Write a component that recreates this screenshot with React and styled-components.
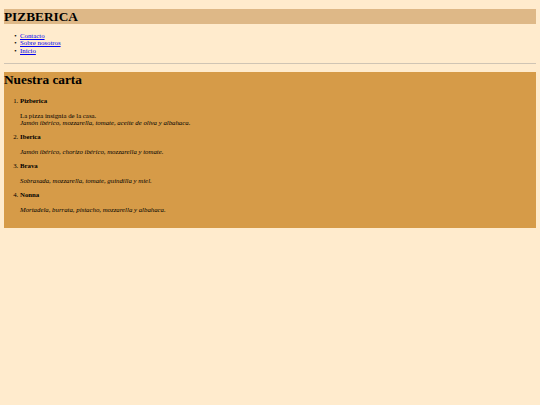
import React from "react";
import styled, { createGlobalStyle } from "styled-components";

const GlobalStyle = createGlobalStyle`
  html, body {
    margin: 0;
    padding: 0;
    background: #ffebcd;
    font-family: "Liberation Serif", "Times New Roman", serif;
    color: #000;
  }
`;

const Page = styled.div`
  padding: 9px 4px 0;
`;

const Header = styled.header`
  background: #deb887;
`;

const Title = styled.h1`
  margin: 0;
  font-size: 13.3px;
  line-height: 15px;
  font-weight: bold;
`;

const NavList = styled.ul`
  margin: 8px 0 0;
  padding-left: 16px;
  list-style: disc;
  font-size: 6.8px;
  line-height: 7.4px;
`;

const NavItem = styled.li`
  &::marker {
    content: "•\\00a0\\00a0";
  }
`;

const NavLink = styled.a`
  color: #0000ee;
  text-decoration: underline;
`;

const Rule = styled.hr`
  margin: 8.6px 0 8px;
  border: 0;
  border-top: 1px solid #cfc4b4;
  height: 0;
`;

const Menu = styled.section`
  background: #d69b48;
  padding: 0 0 7.6px;
`;

const MenuTitle = styled.h1`
  margin: 0;
  font-size: 13.3px;
  line-height: 15px;
  font-weight: bold;
`;

const Pizzas = styled.ol`
  margin: 10px 0 0;
  padding-left: 16px;
  list-style: decimal;
  font-size: 6.8px;
  line-height: 7.4px;
`;

const Pizza = styled.li``;

const PizzaName = styled.strong`
  display: block;
  margin-bottom: 7.6px;
`;

const PizzaText = styled.p`
  margin: 0 0 6.6px;
`;

const pizzas = [
  {
    name: "Pizberica",
    intro: "La pizza insignia de la casa.",
    ingredients: "Jamón ibérico, mozzarella, tomate, aceite de oliva y albahaca.",
  },
  {
    name: "Iberica",
    ingredients: "Jamón ibérico, chorizo ibérico, mozzarella y tomate.",
  },
  {
    name: "Brava",
    ingredients: "Sobrasada, mozzarella, tomate, guindilla y miel.",
  },
  {
    name: "Nonna",
    ingredients: "Mortadela, burrata, pistacho, mozzarella y albahaca.",
  },
];

export default function App() {
  return (
    <>
      <GlobalStyle />
      <Page>
        <Header>
          <Title>PIZBERICA</Title>
        </Header>
        <nav>
          <NavList>
            <NavItem>
              <NavLink href="#contacto">Contacto</NavLink>
            </NavItem>
            <NavItem>
              <NavLink href="#nosotros">Sobre nosotros</NavLink>
            </NavItem>
            <NavItem>
              <NavLink href="#inicio">Inicio</NavLink>
            </NavItem>
          </NavList>
        </nav>
        <Rule />
        <Menu>
          <MenuTitle>Nuestra carta</MenuTitle>
          <Pizzas>
            {pizzas.map((p) => (
              <Pizza key={p.name}>
                <PizzaName>{p.name}</PizzaName>
                <PizzaText>
                  {p.intro && (
                    <>
                      {p.intro}
                      <br />
                    </>
                  )}
                  <em>{p.ingredients}</em>
                </PizzaText>
              </Pizza>
            ))}
          </Pizzas>
        </Menu>
      </Page>
    </>
  );
}
